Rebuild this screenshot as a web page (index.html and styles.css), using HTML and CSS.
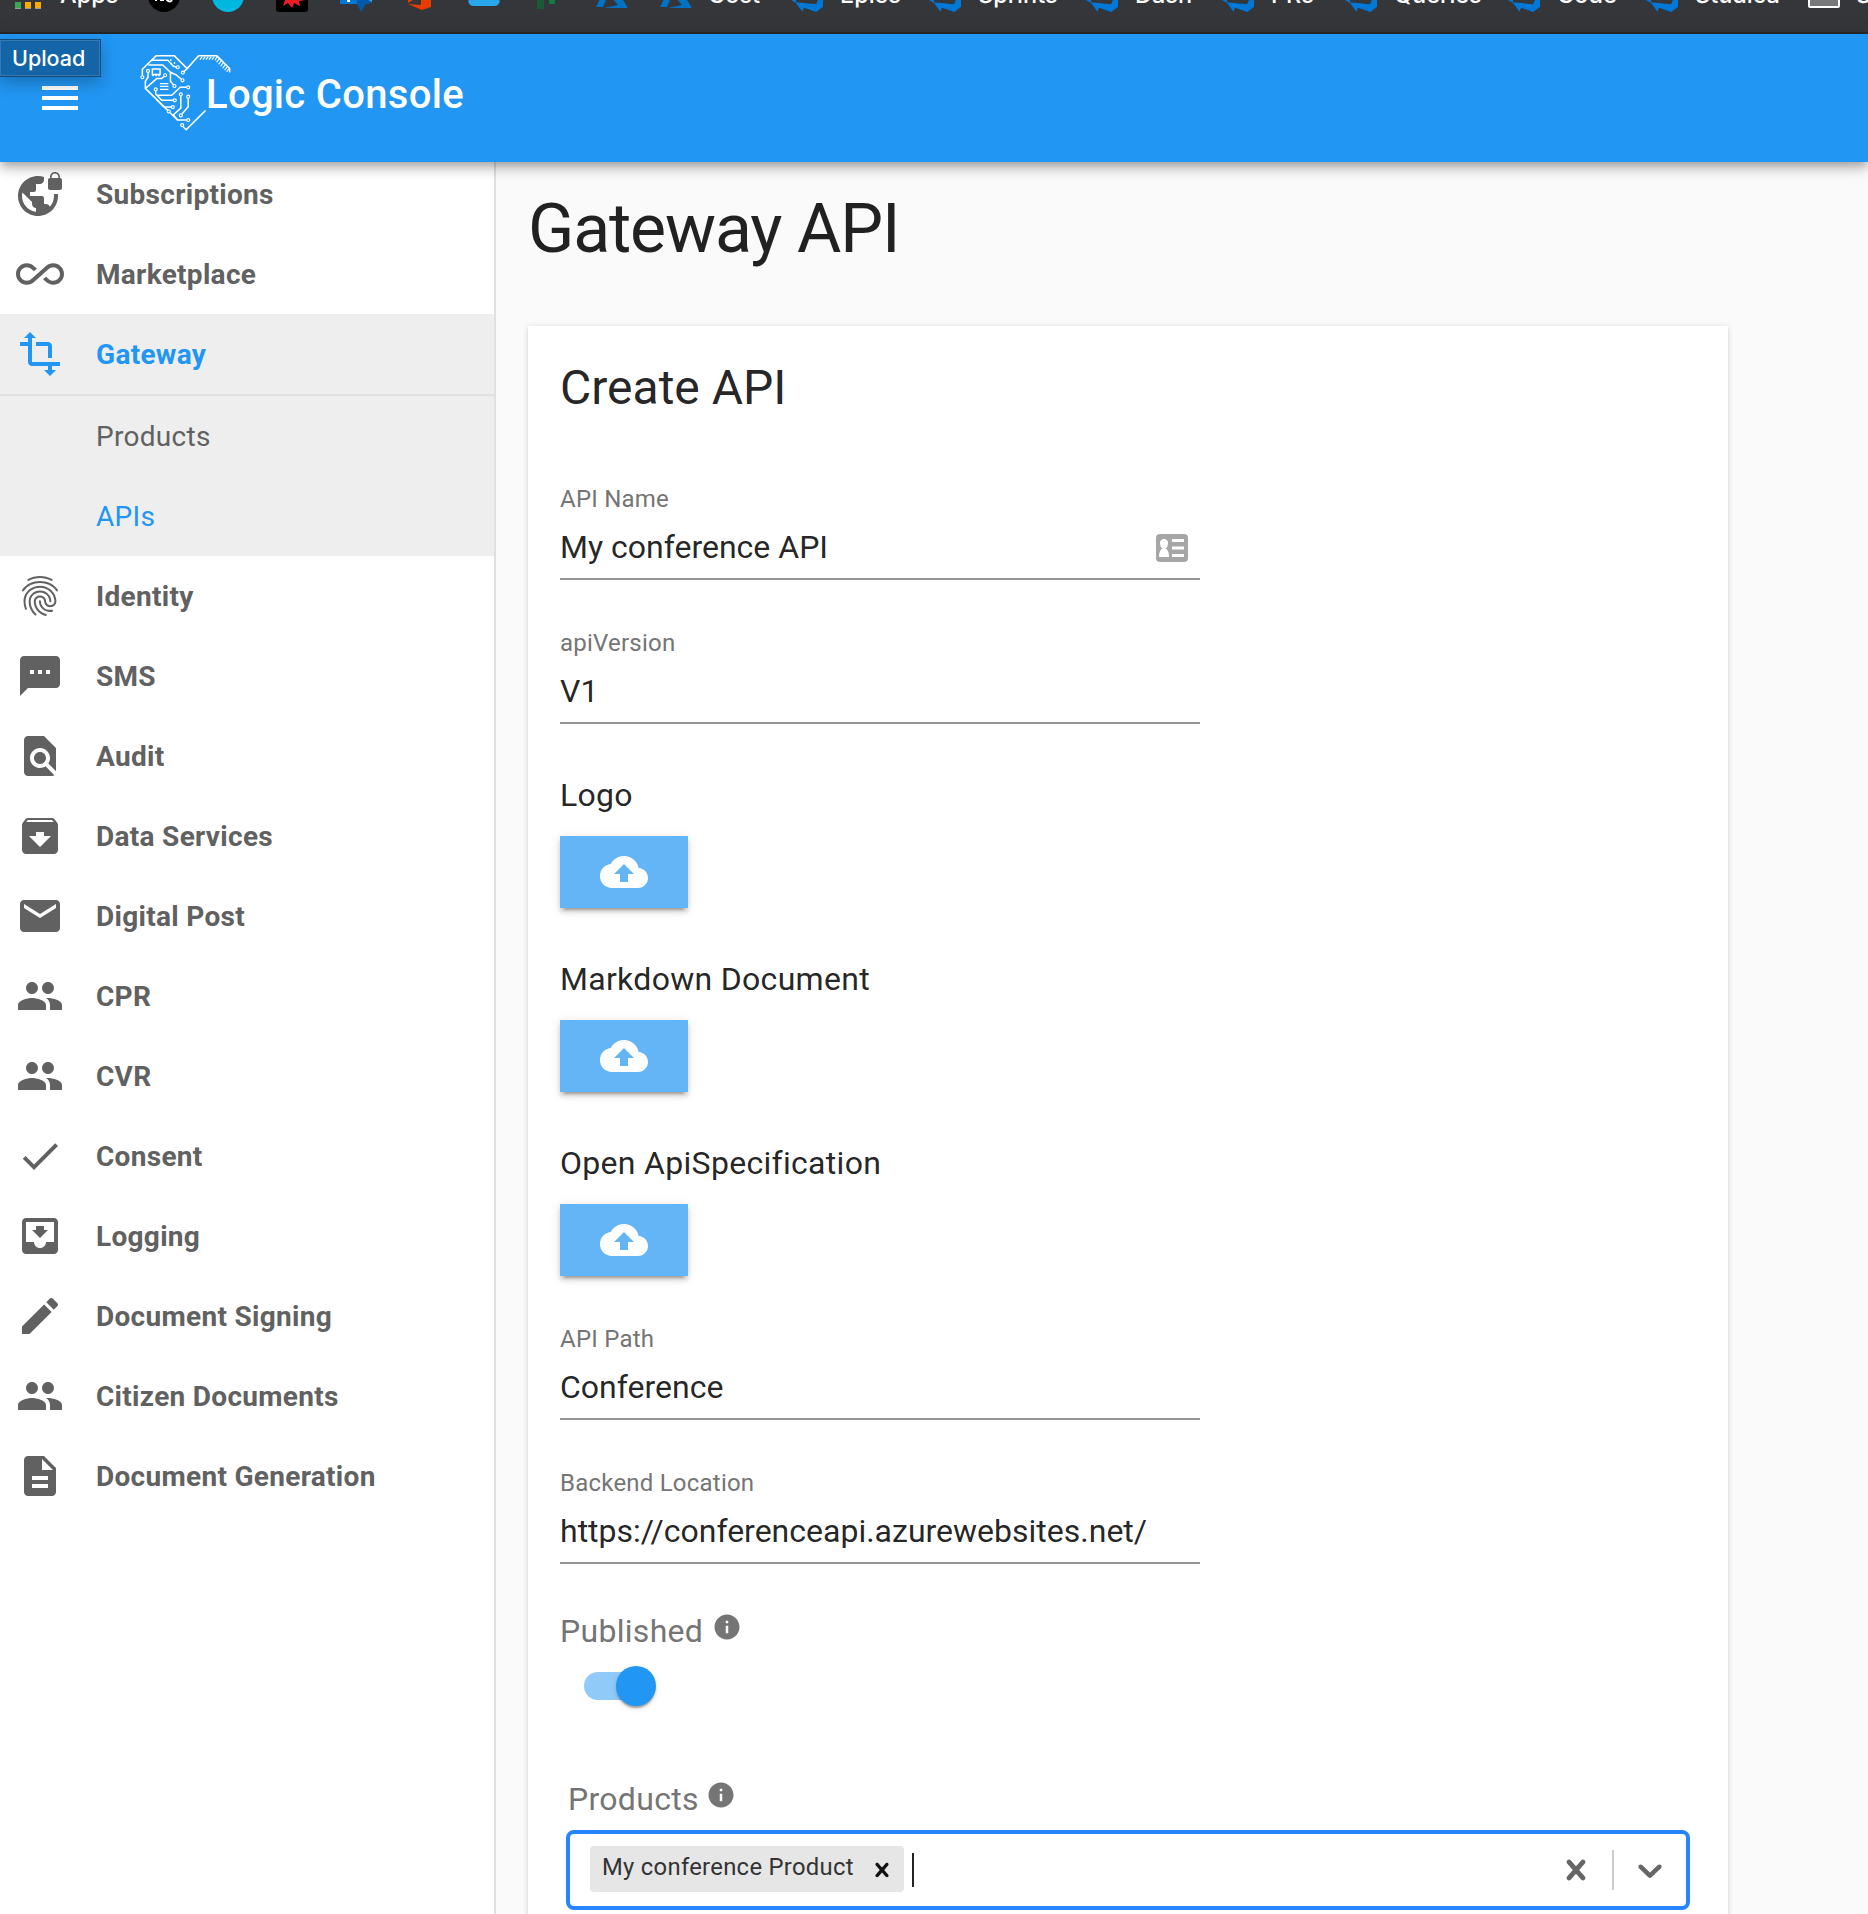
FILE: index.html
```html
<!DOCTYPE html>
<html lang="en">
<head>
<meta charset="utf-8">
<title>Logic Console</title>
<link rel="stylesheet" href="styles.css">
</head>
<body>
<svg class="defs" aria-hidden="true">
  <symbol id="devops" viewBox="0 0 32 32"><path fill="#0078d7" d="M32 6v20.700L25.300 32 13 27.700l-1.600 4L4.500 22.300 25 24.300 27 20V7L14 0l10.500 2z M0 11l4-6 10-4v5L5 9v14L0 20z"/></symbol>
  <symbol id="azure" viewBox="0 0 32 32"><path fill="#0072c6" d="M17 3 8 11 0 27h7zM18 5l-4 11 8 9-14 3h24z"/></symbol>
  <symbol id="people" viewBox="0 0 24 24"><path d="M16 11c1.660 0 2.990-1.340 2.990-3S17.660 5 16 5s-3 1.340-3 3 1.340 3 3 3zm-8 0c1.660 0 2.990-1.340 2.990-3S9.660 5 8 5 5 6.340 5 8s1.340 3 3 3zm0 2c-2.330 0-7 1.170-7 3.500V19h14v-2.500c0-2.330-4.670-3.500-7-3.500zm8 0c-.29 0-.62.020-.97.050 1.160.84 1.970 1.970 1.970 3.450V19h6v-2.500c0-2.330-4.670-3.500-7-3.500z"/></symbol>
  <symbol id="upload" viewBox="0 0 24 24"><path d="M19.350 10.040C18.670 6.590 15.640 4 12 4 9.110 4 6.600 5.640 5.350 8.040 2.340 8.360 0 10.910 0 14c0 3.310 2.690 6 6 6h13c2.760 0 5-2.240 5-5 0-2.640-2.050-4.780-4.650-4.960zM14 13v4h-4v-4H7l5-5 5 5h-3z"/></symbol>
  <symbol id="info" viewBox="0 0 24 24"><path d="M12 2C6.480 2 2 6.480 2 12s4.480 10 10 10 10-4.480 10-10S17.520 2 12 2zm1 15h-2v-6h2v6zm0-8h-2V7h2v2z"/></symbol>
  <symbol id="cross" viewBox="0 0 20 20"><path d="M14.348 14.849c-0.469 0.469-1.229 0.469-1.697 0l-2.651-3.030-2.651 3.029c-0.469 0.469-1.229 0.469-1.697 0-0.469-0.469-0.469-1.229 0-1.697l2.758-3.150-2.759-3.152c-0.469-0.469-0.469-1.228 0-1.697s1.228-0.469 1.697 0l2.652 3.031 2.651-3.031c0.469-0.469 1.228-0.469 1.697 0s0.469 1.229 0 1.697l-2.758 3.152 2.758 3.150c0.469 0.469 0.469 1.229 0 1.698z"/></symbol>
</svg>

<div class="bookmarks">
  <svg class="fav" viewBox="0 0 32 32"><path fill="#34a853" d="M3 22h6v6H3z"/><path fill="#fbab00" d="M13 22h6v6h-6zM23 22h6v6h-6z"/><path fill="#999" d="M3 28h6v1H3zM13 28h6v1h-6zM23 28h6v1h-6z"/></svg>
  <span>Apps</span>
  <svg class="fav" viewBox="0 0 32 32"><circle cx="16" cy="16" r="16" fill="#000"/><path stroke="#fff" stroke-width="2" fill="none" d="M8 15v6M12 20h4M19 16v4q3 3 5 0"/></svg>
  <svg class="fav" viewBox="0 0 32 32"><circle cx="16" cy="16" r="16" fill="#00b7e0"/></svg>
  <svg class="fav" viewBox="0 0 32 32"><rect width="32" height="32" rx="3" fill="#000"/><path fill="#ed1c24" d="M6 10h20l4 10-7 1 1 5-6-3-2 5-4-5-5 3 2-6z"/></svg>
  <svg class="fav" viewBox="0 0 32 32"><path fill="#0358a7" d="M14 10h18v13l-6 1-5 8-4-8z"/><path fill="#0078d7" d="M0 6h17v18H0z"/><path fill="#28a8ea" d="M19 15h13v7z"/><path fill="#fff" d="M7 18h3v4H7z"/></svg>
  <svg class="fav" viewBox="0 0 32 32"><path fill="#eb3c00" d="M4 4 18 0l9 3v24l-9 3-14-6 13 1V6l-8 2v12l-5 3z"/></svg>
  <svg class="fav" viewBox="0 0 32 32"><path fill="#28a8ea" d="M5 6h22v11l5 4q-1 5-6 5H6q-5 0-6-5l5-4z"/></svg>
  <svg class="fav" viewBox="0 0 32 32"><path fill="#185c37" d="M5 10h7v19H5z"/><path fill="#107c41" d="M12 10h11v14h-6v-4h-5z"/></svg>
  <svg class="fav"><use href="#azure"/></svg>
  <svg class="fav"><use href="#azure"/></svg><span>Cost</span>
  <svg class="fav"><use href="#devops"/></svg><span>Epics</span>
  <svg class="fav"><use href="#devops"/></svg><span>Sprints</span>
  <svg class="fav"><use href="#devops"/></svg><span>Dash</span>
  <svg class="fav"><use href="#devops"/></svg><span>PRs</span>
  <svg class="fav"><use href="#devops"/></svg><span>Queries</span>
  <svg class="fav"><use href="#devops"/></svg><span>Code</span>
  <svg class="fav"><use href="#devops"/></svg><span>Studica</span>
  <svg class="fav" viewBox="0 0 32 32"><rect x="1" y="5" width="30" height="22" rx="1" fill="#77787a" stroke="#fff" stroke-width="2"/></svg><span>S</span>
</div>

<header class="appbar">
  <svg class="menu-icon" viewBox="0 0 24 24"><path d="M3 18h18v-2H3v2zm0-5h18v-2H3v2zm0-7v2h18V6H3z"/></svg>
  <svg class="heart" viewBox="60 40 275 235">
    <g fill="none" stroke="#fff" stroke-width="4.500">
      <path d="M67 107V88L108 48H163L201 86 235 48H290L328 86V98M201 86 191 95"/>
      <path d="M96 61H143L160 79 168 81M85 75H128L151 97 168 105 184 118M151 97V124L160 134"/>
      <path d="M84 98V112L76 124V145L143 211M150 218 172 240H199M188 259 198 269 256 211"/>
      <path d="M131 110 125 116H110L78 144M107 153V162L125 181H159M112 166H155L180 142H199M110 179 132 201H153"/>
      <path d="M182 168V204L160 224 172 240M204 175V200L186 221"/>
      <path d="M97 87H120V104H97ZM99 104V109M108 104V109M117 104V109"/>
      <path stroke-width="3.500" d="M120 131H145M120 139H145M120 148H145"/>
      <path stroke-width="3.500" d="M246 50 239 59M255 50 248 59M264 50 257 59M273 50 266 59M282 50 275 59M291 50 284 61M297 56 289 67M303 62 295 73M309 68 301 79M315 74 307 85M321 80 313 91M327 86 319 95"/>
      <g stroke-width="3.500"><circle cx="67" cy="112" r="4.500"/><circle cx="84" cy="93" r="4.500"/><circle cx="173" cy="82" r="4.500"/><circle cx="188" cy="98" r="4.500"/><circle cx="187" cy="121" r="4.500"/><circle cx="163" cy="138" r="4.500"/><circle cx="135" cy="106" r="4.500"/><circle cx="107" cy="148" r="4.500"/><circle cx="204" cy="142" r="4.500"/><circle cx="182" cy="163" r="4.500"/><circle cx="204" cy="170" r="4.500"/><circle cx="164" cy="181" r="4.500"/><circle cx="158" cy="201" r="4.500"/><circle cx="146" cy="214" r="4.500"/><circle cx="182" cy="226" r="4.500"/><circle cx="204" cy="240" r="4.500"/><circle cx="186" cy="255" r="4.500"/></g>
    </g>
    <g fill="#fff"><circle cx="152" cy="60" r="2.500"/><circle cx="163" cy="69" r="2.500"/><circle cx="153" cy="71" r="2.500"/></g>
  </svg>
  <span class="brand">Logic Console</span>
  <span class="tooltip">Upload</span>
</header>

<div class="layout">
  <nav class="sidebar">
    <a class="item"><svg viewBox="0 0 24 24"><path d="M22 4v-.5C22 2.120 20.880 1 19.500 1S17 2.120 17 3.500V4c-.55 0-1 .45-1 1v4c0 .55.45 1 1 1h5c.55 0 1-.45 1-1V5c0-.55-.45-1-1-1zm-.8 0h-3.400v-.5c0-.94.76-1.700 1.700-1.700s1.700.76 1.700 1.700V4zm-2.280 8c.04.330.080.660.080 1 0 2.080-.8 3.970-2.100 5.390-.26-.81-1-1.390-1.900-1.390h-1v-3c0-.55-.45-1-1-1H7v-2h2c.55 0 1-.45 1-1V7h2c1.100 0 2-.9 2-2V3.460c-.95-.3-1.950-.46-3-.46C5.480 3 1 7.480 1 13s4.480 10 10 10 10-4.480 10-10c0-.34-.020-.67-.050-1h-2.030zM10 20.930c-3.950-.49-7-3.850-7-7.930 0-.62.080-1.210.21-1.790L8 16v1c0 1.100.9 2 2 2v1.930z"/></svg>Subscriptions</a>
    <a class="item"><svg viewBox="0 0 24 24"><path d="M18.600 6.620c-1.440 0-2.800.56-3.770 1.530L12 10.660 10.480 12h.01L7.800 14.390c-.64.640-1.490.990-2.400.990-1.870 0-3.390-1.510-3.390-3.380S3.530 8.620 5.400 8.620c.91 0 1.760.35 2.440 1.030l1.130 1 1.510-1.340L9.220 8.200C8.200 7.180 6.840 6.620 5.400 6.620 2.420 6.620 0 9.040 0 12s2.420 5.380 5.400 5.380c1.440 0 2.800-.56 3.770-1.530l2.830-2.500.010.010L13.520 12h-.01l2.690-2.390c.64-.64 1.490-.99 2.400-.99 1.870 0 3.390 1.510 3.390 3.380s-1.520 3.380-3.390 3.380c-.9 0-1.760-.35-2.440-1.030l-1.140-1.010-1.510 1.340 1.270 1.120c1.020 1.010 2.370 1.570 3.820 1.570 2.980 0 5.400-2.410 5.400-5.380s-2.420-5.370-5.400-5.370z"/></svg>Marketplace</a>
    <div class="group">
      <a class="item active"><svg viewBox="0 0 24 24"><path d="M22 18v-2H8V4h2L7 1 4 4h2v2H2v2h4v8c0 1.100.9 2 2 2h8v2h-2l3 3 3-3h-2v-2h4zM10 8h6v6h2V8c0-1.100-.9-2-2-2h-6v2z"/></svg>Gateway</a>
      <a class="subitem first">Products</a>
      <a class="subitem active">APIs</a>
    </div>
    <a class="item"><svg viewBox="0 0 24 24"><path d="M17.810 4.470c-.08 0-.16-.02-.23-.06C15.660 3.420 14 3 12.010 3c-1.980 0-3.860.47-5.570 1.410-.24.130-.54.040-.68-.2-.13-.24-.04-.55.2-.68C7.820 2.520 9.860 2 12.010 2c2.130 0 3.990.47 6.030 1.520.25.130.34.430.21.670-.09.180-.26.280-.44.280zM3.500 9.720c-.1 0-.2-.03-.29-.09-.23-.16-.28-.47-.12-.7.99-1.400 2.250-2.500 3.750-3.270C9.980 4.040 14 4.030 17.150 5.650c1.500.77 2.760 1.860 3.750 3.250.16.220.11.540-.12.700-.23.160-.54.110-.7-.12-.9-1.260-2.040-2.250-3.390-2.940-2.870-1.470-6.540-1.470-9.400.010-1.360.700-2.500 1.700-3.400 2.960-.08.140-.23.210-.39.210zm6.250 12.070c-.13 0-.26-.05-.35-.15-.87-.87-1.340-1.430-2.010-2.640-.69-1.230-1.050-2.730-1.050-4.340 0-2.970 2.540-5.390 5.660-5.390s5.660 2.420 5.660 5.390c0 .28-.22.500-.5.500s-.5-.22-.5-.5c0-2.420-2.090-4.390-4.660-4.390-2.570 0-4.660 1.970-4.660 4.390 0 1.440.320 2.770.930 3.850.640 1.150 1.080 1.640 1.850 2.420.19.200.19.510 0 .71-.11.100-.24.150-.37.150zm7.170-1.850c-1.190 0-2.240-.3-3.100-.89-1.490-1.010-2.380-2.650-2.380-4.390 0-.28.22-.5.5-.5s.5.220.5.500c0 1.410.720 2.740 1.940 3.560.710.480 1.540.710 2.540.710.240 0 .640-.03 1.040-.1.270-.05.530.130.580.410.050.270-.13.530-.41.580-.57.110-1.070.120-1.210.120zM14.910 22c-.04 0-.09-.01-.13-.02-1.590-.44-2.630-1.030-3.720-2.100-1.400-1.390-2.170-3.240-2.170-5.220 0-1.620 1.380-2.940 3.080-2.940 1.700 0 3.080 1.320 3.080 2.940 0 1.070.930 1.940 2.080 1.940s2.080-.87 2.080-1.940c0-3.770-3.250-6.830-7.250-6.830-2.840 0-5.440 1.580-6.610 4.030-.39.810-.59 1.760-.59 2.800 0 .78.070 2.010.670 3.610.1.260-.03.550-.29.640-.26.100-.55-.04-.64-.29-.49-1.310-.73-2.610-.73-3.960 0-1.200.230-2.290.680-3.240 1.330-2.790 4.280-4.600 7.510-4.600 4.550 0 8.250 3.510 8.250 7.830 0 1.620-1.380 2.940-3.080 2.940s-3.080-1.320-3.080-2.940c0-1.070-.93-1.940-2.080-1.940s-2.080.87-2.080 1.940c0 1.710.660 3.310 1.870 4.510.950.940 1.860 1.460 3.270 1.850.27.070.42.350.35.610-.05.230-.26.380-.47.380z"/></svg>Identity</a>
    <a class="item"><svg viewBox="0 0 24 24"><path d="M20 2H4c-1.100 0-1.990.9-1.990 2L2 22l4-4h14c1.100 0 2-.9 2-2V4c0-1.100-.9-2-2-2zM9 11H7V9h2v2zm4 0h-2V9h2v2zm4 0h-2V9h2v2z"/></svg>SMS</a>
    <a class="item"><svg viewBox="0 0 24 24"><path d="M20 19.590V8l-6-6H6c-1.100 0-1.990.9-1.990 2L4 20c0 1.100.89 2 1.990 2H18c.45 0 .85-.15 1.190-.4l-4.430-4.430c-.8.520-1.740.830-2.760.830-2.760 0-5-2.240-5-5s2.240-5 5-5 5 2.240 5 5c0 1.020-.31 1.960-.83 2.750L20 19.590zM9 13c0 1.660 1.340 3 3 3s3-1.340 3-3-1.340-3-3-3-3 1.340-3 3z"/></svg>Audit</a>
    <a class="item"><svg viewBox="0 0 24 24"><path d="M20.540 5.230l-1.390-1.680C18.880 3.210 18.470 3 18 3H6c-.47 0-.88.21-1.160.55L3.460 5.230C3.170 5.570 3 6.020 3 6.500V19c0 1.100.9 2 2 2h14c1.100 0 2-.9 2-2V6.500c0-.48-.17-.93-.46-1.270zM12 17.500L6.500 12H10v-2h4v2h3.500L12 17.500zM5.120 5l.81-1h12l.94 1H5.120z"/></svg>Data Services</a>
    <a class="item"><svg viewBox="0 0 24 24"><path d="M20 4H4c-1.100 0-1.990.9-1.990 2L2 18c0 1.100.9 2 2 2h16c1.100 0 2-.9 2-2V6c0-1.100-.9-2-2-2zm0 4l-8 5-8-5V6l8 5 8-5v2z"/></svg>Digital Post</a>
    <a class="item"><svg><use href="#people"/></svg>CPR</a>
    <a class="item"><svg><use href="#people"/></svg>CVR</a>
    <a class="item"><svg viewBox="0 0 24 24"><path d="M9 16.200L4.800 12l-1.400 1.400L9 19 21 7l-1.400-1.400L9 16.200z"/></svg>Consent</a>
    <a class="item"><svg viewBox="0 0 24 24"><path d="M16 9h-2V7h-4v2H8l4 4 4-4zm3-6H4.990C3.880 3 3.010 3.890 3.010 5L3 19c0 1.100.88 2 1.990 2H19c1.100 0 2-.9 2-2V5c0-1.110-.9-2-2-2zm0 12h-4c0 1.660-1.350 3-3 3s-3-1.340-3-3H4.990V5H19v10z"/></svg>Logging</a>
    <a class="item"><svg viewBox="0 0 24 24"><path d="M3 17.250V21h3.750L17.810 9.940l-3.750-3.750L3 17.250zM20.710 7.040c.39-.39.39-1.020 0-1.410l-2.340-2.340c-.39-.39-1.020-.39-1.410 0l-1.830 1.830 3.750 3.750 1.830-1.830z"/></svg>Document Signing</a>
    <a class="item"><svg><use href="#people"/></svg>Citizen Documents</a>
    <a class="item"><svg viewBox="0 0 24 24"><path d="M14 2H6c-1.100 0-1.990.9-1.990 2L4 20c0 1.100.89 2 1.990 2H18c1.100 0 2-.9 2-2V8l-6-6zm2 16H8v-2h8v2zm0-4H8v-2h8v2zm-3-5V3.500L18.500 9H13z"/></svg>Document Generation</a>
  </nav>

  <main class="main">
    <h1>Gateway API</h1>
    <section class="card">
      <h2>Create API</h2>
      <div class="form">
        <div class="field">
          <label>API Name</label>
          <div class="value">My conference API
            <svg class="contact" viewBox="0 0 32 28"><rect width="32" height="28" rx="4" fill="#a6a6a6"/><path fill="#fff" d="M3 23q0-7 3.500-8.500Q4 13 4 9.500 4 5 8 5t4 4.500q0 3.500-2.500 5Q13 16 13 23zM16 5h12v3H16zM16 12.500h12v3H16zM16 20h12v3H16z"/></svg>
          </div>
        </div>
        <div class="field"><label>apiVersion</label><div class="value">V1</div></div>
        <div class="upload"><span>Logo</span><button><svg><use href="#upload"/></svg></button></div>
        <div class="upload"><span>Markdown Document</span><button><svg><use href="#upload"/></svg></button></div>
        <div class="upload"><span>Open ApiSpecification</span><button><svg><use href="#upload"/></svg></button></div>
        <div class="field"><label>API Path</label><div class="value">Conference</div></div>
        <div class="field"><label>Backend Location</label><div class="value">https://conferenceapi.azurewebsites.net/</div></div>
      </div>
      <div class="caption published">Published<svg><use href="#info"/></svg></div>
      <div class="switch"><span class="thumb"></span></div>
      <div class="caption products">Products<svg><use href="#info"/></svg></div>
      <div class="select">
        <span class="chip">My conference Product<svg><use href="#cross"/></svg></span>
        <span class="cursor"></span>
        <svg class="control"><use href="#cross"/></svg>
        <span class="separator"></span>
        <svg class="control" viewBox="0 0 20 20"><path d="M4.516 7.548c0.436-0.446 1.043-0.481 1.576 0l3.908 3.747 3.908-3.747c0.533-0.481 1.141-0.446 1.574 0 0.436 0.445 0.408 1.197 0 1.615-0.406 0.418-4.695 4.502-4.695 4.502-0.217 0.223-0.502 0.335-0.787 0.335s-0.570-0.112-0.789-0.335c0 0-4.287-4.084-4.695-4.502s-0.436-1.170 0-1.615z"/></svg>
      </div>
    </section>
  </main>
</div>
</body>
</html>
```

FILE: styles.css
```css
* { box-sizing: border-box; }
body {
  margin: 0;
  height: 1914px;
  overflow: hidden;
  display: flex;
  flex-direction: column;
  background: #fafafa;
  color: rgba(0, 0, 0, 0.87);
  font-family: Roboto, sans-serif;
}
svg { display: block; flex: none; fill: currentColor; }
.defs { position: absolute; width: 0; height: 0; }

/* Browser bookmarks strip */
.bookmarks {
  flex: none;
  height: 34px;
  border-bottom: 2px solid #28292b;
  background: #35363a;
  color: #fff;
  overflow: hidden;
  display: grid;
  grid-template-columns: 48px 88px 64px 64px 64px 64px 64px 64px 64px 64px 48px 83px 49px 89px 49px 108px 49px 87px 49px 74px 49px 114px 49px 89px 49px 113px 48px 40px;
  grid-template-rows: 32px;
  padding-left: 12px;
  font: 500 23.5px/32px Inter, sans-serif;
}
.bookmarks > * { margin-top: -20px; height: 32px; }
.bookmarks span { margin-top: -21px; white-space: nowrap; }
.fav { width: 32px; }

/* App bar */
.appbar {
  position: relative;
  z-index: 2;
  flex: none;
  height: 128px;
  display: flex;
  align-items: center;
  padding-left: 36px;
  background: #2196f3;
  color: #fff;
  box-shadow: 0 4px 8px -2px rgba(0, 0, 0, 0.2), 0 8px 10px rgba(0, 0, 0, 0.14), 0 2px 20px rgba(0, 0, 0, 0.12);
}
.menu-icon { width: 48px; height: 48px; }
.heart { width: 92px; height: 79px; margin: -11px 0 0 56px; }
.brand {
  margin: -6px 0 0 -26px;
  font-size: 40px;
  font-weight: 500;
  line-height: 64px;
  letter-spacing: 0.3px;
}
.tooltip {
  position: absolute;
  left: -1px;
  top: 5px;
  width: 102px;
  height: 38px;
  padding-left: 12px;
  border: 1px solid #124b7c;
  box-shadow: inset 0 0 0 1px #3578b3, 0 6px 16px rgba(0, 0, 0, 0.25);
  background: #1464a8;
  font: 500 21.5px/36px Inter, sans-serif;
}

/* Navigation */
.layout { flex: 1; display: flex; min-height: 0; }
.sidebar {
  flex: none;
  width: 496px;
  margin-top: -8px;
  border-right: 2px solid #e0e0e0;
  background: #fff;
  color: #616161;
  font-size: 28px;
  letter-spacing: 0.3px;
}
.item, .subitem { height: 80px; display: flex; align-items: center; }
.item { gap: 32px; padding-left: 16px; font-weight: 700; }
.item svg { width: 48px; height: 48px; }
.group { background: #eee; }
.subitem { padding-left: 96px; }
.subitem.first { height: 82px; border-top: 2px solid #e0e0e0; }
.active { color: #2196f3; }

/* Page content */
.main { flex: 1; padding: 25px 32px 0; overflow: hidden; }
h1, h2 { margin: 0; font-weight: 400; }
h1 { font-size: 68px; line-height: 84px; margin-bottom: 55px; letter-spacing: -1.15px; }
.card {
  width: 1200px;
  height: 1700px;
  padding: 30px 32px 0;
  background: #fff;
  box-shadow: 0 4px 2px -2px rgba(0, 0, 0, 0.1), 0 2px 2px rgba(0, 0, 0, 0.08), 0 1px 6px rgba(0, 0, 0, 0.14);
}
h2 { font-size: 48px; line-height: 64px; margin-bottom: 63px; }
.form { display: flex; flex-direction: column; gap: 47px; }
.field { width: 640px; }
.field label {
  display: block;
  margin-bottom: 13px;
  color: #757575;
  font-size: 24px;
  line-height: 32px;
  letter-spacing: 0.22px;
}
.value {
  height: 52px;
  display: flex;
  justify-content: space-between;
  border-bottom: 2px solid #949494;
  font-size: 32px;
  line-height: 38px;
}
.contact { width: 32px; height: 28px; margin: 6px 12px 0 0; }
.upload { display: flex; flex-direction: column; gap: 17px; font-size: 32px; line-height: 48px; letter-spacing: 0.3px; }
.upload button {
  display: flex;
  align-items: center;
  justify-content: center;
  width: 128px;
  height: 72px;
  padding: 0;
  border: 0;
  background: #64b5f6;
  color: #fff;
  box-shadow: 0 6px 2px -4px rgba(0, 0, 0, 0.2), 0 4px 4px rgba(0, 0, 0, 0.14), 0 2px 10px rgba(0, 0, 0, 0.12);
}
.upload svg { width: 48px; height: 48px; }
.caption {
  display: flex;
  color: #757575;
  font-size: 32px;
  line-height: 48px;
  letter-spacing: 0.3px;
}
.caption svg { width: 30px; height: 30px; margin: 5px 0 0 9px; }
.published { margin-top: 43px; }
.products { margin: 75px 0 7px 8px; }
.products svg { margin-left: 7px; }
.switch { width: 68px; height: 28px; margin: 17px 0 6px 24px; border-radius: 14px; background: #90caf9; }
.thumb {
  display: block;
  width: 40px;
  height: 40px;
  border-radius: 50%;
  background: #2196f3;
  box-shadow: 0 4px 2px -2px rgba(0, 0, 0, 0.2), 0 2px 2px rgba(0, 0, 0, 0.14), 0 2px 6px rgba(0, 0, 0, 0.12);
  transform: translate(32px, -6px);
}
.select {
  width: 1124px;
  height: 80px;
  margin-left: 6px;
  padding: 0 16px 0 20px;
  border: 4px solid #2684ff;
  border-radius: 8px;
  display: flex;
  align-items: center;
  color: #666;
}
.chip {
  display: flex;
  justify-content: space-between;
  width: 314px;
  height: 46px;
  margin-top: -2px;
  padding: 0 8px 0 12px;
  border-radius: 4px;
  background: #e6e6e6;
  color: #333;
  font-size: 23.8px;
  line-height: 43px;
  letter-spacing: 0.3px;
}
.chip svg { width: 28px; height: 28px; margin-top: 10px; color: #111; }
.cursor { width: 2px; height: 34px; margin: 0 auto 0 8px; background: #222; }
.control { width: 40px; height: 40px; }
.separator { width: 2px; height: 40px; margin: 0 16px; background: #ccc; }
```
